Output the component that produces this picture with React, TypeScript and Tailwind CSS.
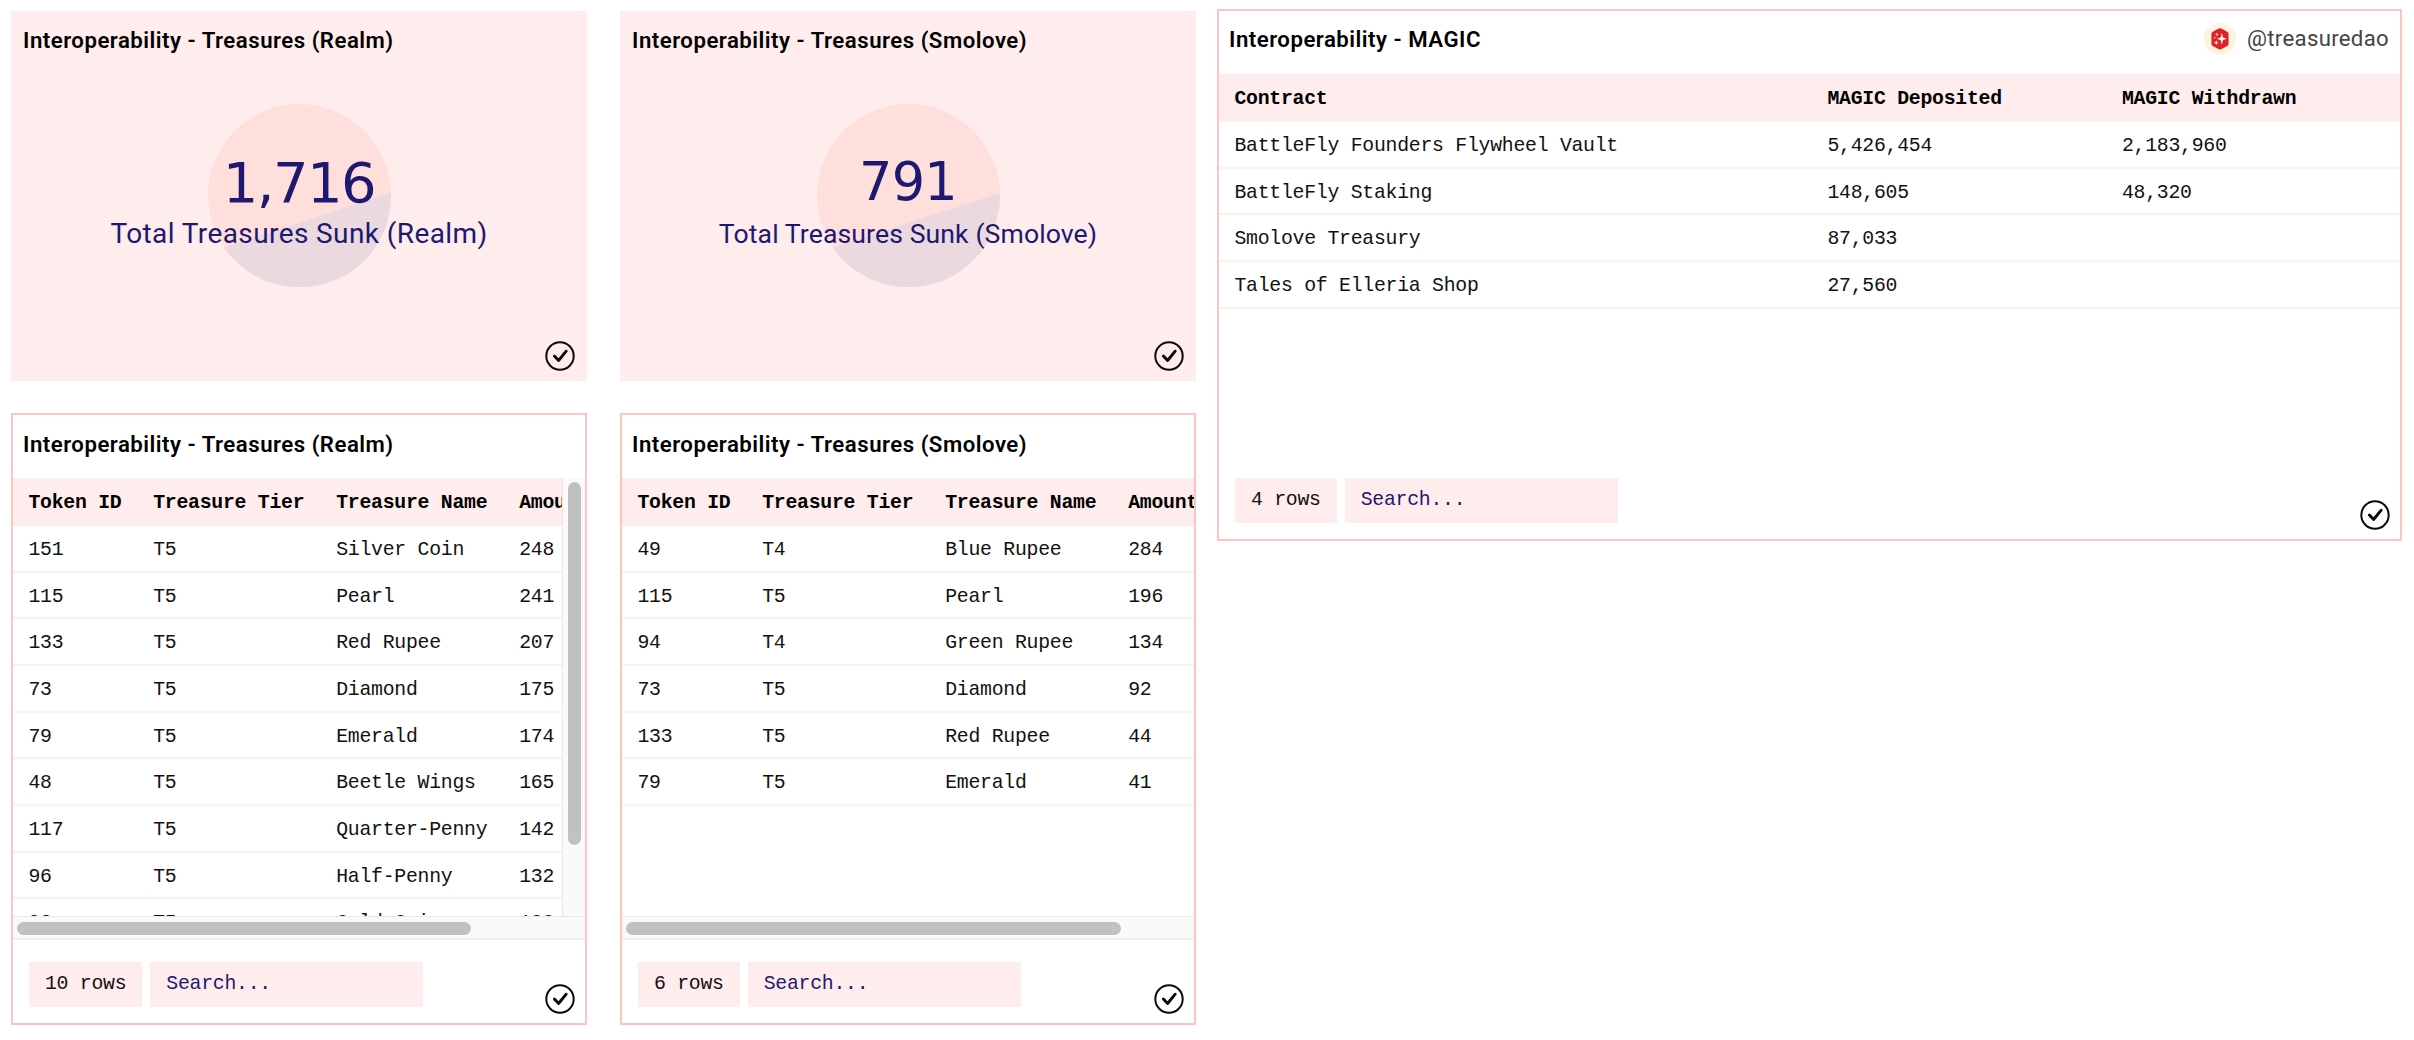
import clsx from "clsx";

type Column = { label: string; width: string };

type StatCardProps = {
  title: string;
  value: string;
  label: string;
  valueClass: string;
  labelClass: string;
};

type TableCardProps = {
  title: string;
  columns: Column[];
  rows: string[][];
  className: string;
  headerClass: string;
  bodyClass: string;
  titleClass?: string;
  owner?: string;
  scrollX?: string;
  scrollY?: boolean;
  count: number;
};

const treasureColumns: Column[] = [
  { label: "Token ID", width: "w-[124.7px]" },
  { label: "Treasure Tier", width: "w-[183px]" },
  { label: "Treasure Name", width: "w-[183px]" },
  { label: "Amount", width: "w-[102px]" },
];

const magicColumns: Column[] = [
  { label: "Contract", width: "w-[593px]" },
  { label: "MAGIC Deposited", width: "w-[294.5px]" },
  { label: "MAGIC Withdrawn", width: "w-[280px]" },
];

const realmRows = [
  ["151", "T5", "Silver Coin", "248"],
  ["115", "T5", "Pearl", "241"],
  ["133", "T5", "Red Rupee", "207"],
  ["73", "T5", "Diamond", "175"],
  ["79", "T5", "Emerald", "174"],
  ["48", "T5", "Beetle Wings", "165"],
  ["117", "T5", "Quarter-Penny", "142"],
  ["96", "T5", "Half-Penny", "132"],
  ["92", "T5", "Gold Coin", "128"],
];

const smoloveRows = [
  ["49", "T4", "Blue Rupee", "284"],
  ["115", "T5", "Pearl", "196"],
  ["94", "T4", "Green Rupee", "134"],
  ["73", "T5", "Diamond", "92"],
  ["133", "T5", "Red Rupee", "44"],
  ["79", "T5", "Emerald", "41"],
];

const magicRows = [
  ["BattleFly Founders Flywheel Vault", "5,426,454", "2,183,960"],
  ["BattleFly Staking", "148,605", "48,320"],
  ["Smolove Treasury", "87,033", ""],
  ["Tales of Elleria Shop", "27,560", ""],
];

function CheckIcon({ className }: { className: string }) {
  return (
    <svg
      viewBox="0 0 30 30"
      className={clsx("absolute h-[30px] w-[30px]", className)}
      fill="none"
      stroke="#0a0a0a"
    >
      <circle cx="15" cy="15" r="13.7" strokeWidth="2" />
      <path d="M9.4 15l4.200 4.500 7.600-9.300" strokeWidth="2.9" strokeLinecap="round" strokeLinejoin="round" />
    </svg>
  );
}

function PieMark() {
  return (
    <svg
      viewBox="0 0 183 183"
      className="absolute top-[93px] left-[197px] h-[183px] w-[183px]"
    >
      <circle cx="91.5" cy="91.5" r="91.5" fill="#ffdfdb" />
      <path d="M183 89L16 143.5A91.5 91.5 0 0 0 183 89z" fill="#ead9df" />
    </svg>
  );
}

function OwnerLogo() {
  return (
    <svg viewBox="0 0 32 32" className="h-8 w-8">
      <circle cx="16" cy="16" r="16" fill="#fdf3e0" />
      <path
        d="M16 5.2c.7 0 1.300.3 2.200.8l4.600 2.500c1.200.7 1.800 1.500 1.800 2.900v9c0 1.400-.6 2.200-1.800 2.900l-4.600 2.500c-.9.500-1.500.8-2.200.8s-1.300-.3-2.200-.8l-4.600-2.500c-1.200-.7-1.800-1.500-1.800-2.900v-9c0-1.400.6-2.200 1.800-2.900l4.600-2.500c.9-.5 1.500-.8 2.200-.8z"
        fill="#df2226"
      />
      <path d="M17.800 10l1.200 4.600 3.900 1.200-3.900 1.200-1.200 4.800-1.200-4.800-3.900-1.200 3.900-1.200z" fill="#fff5e8" />
      <path d="M12.900 9.400l.6 1.500 1.500.6-1.500.6-.6 1.500-.6-1.500-1.500-.6 1.500-.6z" fill="#fbd9c9" />
      <path d="M12.300 17.300l.7 1.700 1.700.7-1.700.7-.7 1.700-.7-1.700-1.700-.7 1.700-.7z" fill="#fde5d6" />
      <circle cx="10.700" cy="14.800" r=".8" fill="#fbd9c9" />
    </svg>
  );
}

function CardTitle({ children, className }: { children: string; className?: string }) {
  return (
    <h3
      className={clsx(
        "font-[Roboto,sans-serif] text-[22.2px] leading-[30px] font-semibold tracking-[0.5px] whitespace-nowrap text-black",
        className,
      )}
    >
      {children}
    </h3>
  );
}

function StatCard({ title, value, label, valueClass, labelClass }: StatCardProps) {
  return (
    <section className="relative h-[370px] w-[576px] bg-[#ffecec] pt-[14px]">
      <CardTitle className="pl-[12px]">{title}</CardTitle>
      <PieMark />
      <div className="relative flex flex-col items-center pt-[94px] text-[#1e1870]">
        <p className={clsx("flex h-[67px] items-center font-['DejaVu_Sans',sans-serif] whitespace-nowrap", valueClass)}>
          {value}
        </p>
        <p className={clsx("h-[36px] font-[Roboto,sans-serif] leading-[36px] whitespace-nowrap", labelClass)}>
          {label}
        </p>
      </div>
      <CheckIcon className="right-[12px] bottom-[10.5px]" />
    </section>
  );
}

function TableCard({
  title,
  columns,
  rows,
  className,
  headerClass,
  bodyClass,
  titleClass,
  owner,
  scrollX,
  scrollY,
  count,
}: TableCardProps) {
  return (
    <section className={clsx("relative flex flex-col border-2 border-[#ffc4bf] bg-white", className)}>
      <header className={clsx("flex shrink-0 justify-between", headerClass)}>
        <CardTitle className={titleClass}>{title}</CardTitle>
        {owner && (
          <div className="flex h-8 items-center gap-[11px]">
            <OwnerLogo />
            <span className="font-[Roboto,sans-serif] text-[22.2px] tracking-[0.3px] text-[#444]">{owner}</span>
          </div>
        )}
      </header>

      <div className={clsx("flex shrink-0", bodyClass)}>
        <div className="min-w-0 flex-1 overflow-hidden font-['Liberation_Mono',monospace] text-[19.8px] tracking-[-0.25px] whitespace-pre text-[#111]">
          <div className="flex h-[48px] min-w-max items-center bg-[#ffecec] pt-1 pl-[15.5px] font-bold text-black">
            {columns.map((col) => (
              <span key={col.label} className={clsx("shrink-0", col.width)}>
                {col.label}
              </span>
            ))}
          </div>
          {rows.map((row) => (
            <div
              key={row[0]}
              className="flex h-[46.67px] min-w-max items-center border-b-2 border-[#fff0f0] pt-[5px] pl-[15.5px]"
            >
              {row.map((cell, i) => (
                <span key={i} className={clsx("shrink-0", columns[i].width)}>
                  {cell}
                </span>
              ))}
            </div>
          ))}
        </div>
        {scrollY && (
          <div className="w-[23px] shrink-0 border-l border-[#e8e8e8] bg-[#fafafa] pt-1 pl-[5px]">
            <div className="h-[363px] w-[13px] rounded-full bg-[#c1c1c1]" />
          </div>
        )}
      </div>
      {scrollX && (
        <div className="h-[24px] shrink-0 border-t border-b-2 border-t-[#e8e8e8] border-b-[#f0f0f0] bg-[#fafafa] pt-[5px] pl-1">
          <div className={clsx("h-[13px] rounded-full bg-[#c1c1c1]", scrollX)} />
        </div>
      )}

      <footer className="mt-auto mb-[16px] ml-4 flex h-[45px] gap-2 font-['Liberation_Mono',monospace] text-[19.8px] leading-[45px] tracking-[-0.25px]">
        <span className="bg-[#ffecec] px-4 text-[#111]">{count} rows</span>
        <span className="w-[273px] bg-[#ffecec] px-4 text-[#1e1870]">Search...</span>
      </footer>
      <CheckIcon className="right-[10px] bottom-[9px]" />
    </section>
  );
}

export default function App() {
  return (
    <main className="flex h-[1040px] w-[2414px] items-start overflow-hidden bg-white pl-[11px]">
      <div className="mr-[33px] flex flex-col gap-8 pt-[11px]">
        <StatCard
          title="Interoperability - Treasures (Realm)"
          value="1,716"
          label="Total Treasures Sunk (Realm)"
          valueClass="text-[56px] tracking-[-1.6px]"
          labelClass="text-[28px] tracking-[0.4px]"
        />
        <TableCard
          title="Interoperability - Treasures (Realm)"
          columns={treasureColumns}
          rows={realmRows}
          count={10}
          className="h-[612px] w-[576px]"
          headerClass="h-[63px] pt-[14px] pl-[10px]"
          bodyClass="h-[438px]"
          scrollX="w-[454px]"
          scrollY
        />
      </div>

      <div className="mr-[21px] flex flex-col gap-8 pt-[11px]">
        <StatCard
          title="Interoperability - Treasures (Smolove)"
          value="791"
          label="Total Treasures Sunk (Smolove)"
          valueClass="text-[52.5px] tracking-[-0.8px]"
          labelClass="text-[26.6px] tracking-[0.1px]"
        />
        <TableCard
          title="Interoperability - Treasures (Smolove)"
          columns={treasureColumns}
          rows={smoloveRows}
          count={6}
          className="h-[612px] w-[576px]"
          headerClass="h-[63px] pt-[14px] pl-[10px]"
          bodyClass="h-[438px]"
          scrollX="w-[495px]"
        />
      </div>

      <div className="pt-[9px]">
        <TableCard
          title="Interoperability - MAGIC"
          columns={magicColumns}
          rows={magicRows}
          count={4}
          owner="@treasuredao"
          className="h-[532px] w-[1185px]"
          headerClass="h-[63px] pt-[12px] pr-[11px] pl-[10px]"
          titleClass="pt-[1px]"
          bodyClass="h-[300px]"
        />
      </div>
    </main>
  );
}
